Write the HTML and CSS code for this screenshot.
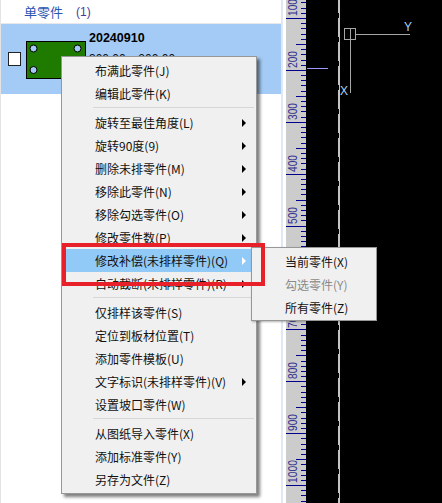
FILE: index.html
```html
<!DOCTYPE html>
<html lang="en">
<head>
  <meta charset="UTF-8">
  <meta name="viewport" content="width=device-width, initial-scale=1.0">
  <title>单零件</title>
  <link rel="stylesheet" href="styles.css">
</head>
<body>
  <div class="app">
    <div class="part-panel">
      <div class="panel-head">
        <span class="panel-title">单零件</span>
        <span class="panel-count">(1)</span>
      </div>
      <div class="part-row">
        <span class="part-check"></span>
        <svg class="part-thumb" width="60" height="38" viewBox="0 0 60 38">
          <rect x="0.5" y="0.5" width="59" height="37" fill="#1f7a00" stroke="#000"/>
          <circle cx="7.5" cy="7.5" r="3.5" fill="#a4cbf5" stroke="#000"/>
          <circle cx="51.5" cy="7.5" r="3.5" fill="#a4cbf5" stroke="#000"/>
          <circle cx="7.5" cy="29" r="3.5" fill="#a4cbf5" stroke="#000"/>
        </svg>
        <div class="part-info">
          <div class="part-name">20240910</div>
          <div class="part-size">300.00 x 200.00</div>
        </div>
      </div>
    </div>
    <div class="splitter"></div>
    <svg class="ruler" width="20" height="503" viewBox="0 0 20 503">
      <path id="ruler-ticks" stroke="#00008c" stroke-width="1" fill="none"/>
      <g class="ruler-labels">
        <text transform="translate(10.5 16) rotate(-90)" textLength="17" lengthAdjust="spacingAndGlyphs">100</text>
        <text transform="translate(10.5 68) rotate(-90)" textLength="17" lengthAdjust="spacingAndGlyphs">200</text>
        <text transform="translate(10.5 120) rotate(-90)" textLength="17" lengthAdjust="spacingAndGlyphs">300</text>
        <text transform="translate(10.5 172) rotate(-90)" textLength="17" lengthAdjust="spacingAndGlyphs">400</text>
        <text transform="translate(10.5 224) rotate(-90)" textLength="17" lengthAdjust="spacingAndGlyphs">500</text>
        <text transform="translate(10.5 276) rotate(-90)" textLength="17" lengthAdjust="spacingAndGlyphs">600</text>
        <text transform="translate(10.5 328) rotate(-90)" textLength="17" lengthAdjust="spacingAndGlyphs">700</text>
        <text transform="translate(10.5 379) rotate(-90)" textLength="17" lengthAdjust="spacingAndGlyphs">800</text>
        <text transform="translate(10.5 431) rotate(-90)" textLength="17" lengthAdjust="spacingAndGlyphs">900</text>
        <text transform="translate(10.5 483) rotate(-90)" textLength="23" lengthAdjust="spacingAndGlyphs">1000</text>
      </g>
    </svg>
    <svg class="canvas" width="136" height="503" viewBox="306 0 136 503">
      <path d="M307 68.5h21" stroke="#9a9aff" fill="none"/>
      <path d="M339.5 0v503" stroke="#c4c4c4" fill="none"/>
      <path d="M338.5 0v503" stroke="#c4c4c4" stroke-dasharray="19 5" stroke-dashoffset="6" fill="none"/>
      <g stroke="#a6a6a6" fill="none">
        <rect x="344.5" y="28.5" width="11" height="11"/>
        <path d="M350.5 28v65M355 34.5h55"/>
      </g>
      <text class="axis-label" x="404" y="31">Y</text>
      <text class="axis-label" x="340" y="95">X</text>
    </svg>
  </div>

  <div class="menu main-menu">
    <div class="menu-item">布满此零件(J)</div>
    <div class="menu-item">编辑此零件(K)</div>
    <div class="menu-sep"></div>
    <div class="menu-item has-sub">旋转至最佳角度(L)</div>
    <div class="menu-item has-sub">旋转90度(9)</div>
    <div class="menu-item has-sub">删除未排零件(M)</div>
    <div class="menu-item has-sub">移除此零件(N)</div>
    <div class="menu-item has-sub">移除勾选零件(O)</div>
    <div class="menu-item has-sub">修改零件数(P)</div>
    <div class="menu-item has-sub active">修改补偿(未排样零件)(Q)</div>
    <div class="menu-item has-sub">自动截断(未排样零件)(R)</div>
    <div class="menu-sep"></div>
    <div class="menu-item">仅排样该零件(S)</div>
    <div class="menu-item">定位到板材位置(T)</div>
    <div class="menu-item">添加零件模板(U)</div>
    <div class="menu-item has-sub">文字标识(未排样零件)(V)</div>
    <div class="menu-item">设置坡口零件(W)</div>
    <div class="menu-sep"></div>
    <div class="menu-item">从图纸导入零件(X)</div>
    <div class="menu-item">添加标准零件(Y)</div>
    <div class="menu-item">另存为文件(Z)</div>
  </div>

  <div class="menu sub-menu">
    <div class="menu-item">当前零件(X)</div>
    <div class="menu-item disabled">勾选零件(Y)</div>
    <div class="menu-item">所有零件(Z)</div>
  </div>

  <div class="callout"></div>

  <script src="ruler.js"></script>
</body>
</html>
```

FILE: styles.css
```css
body {
  font-family: "Noto Sans CJK SC", "Liberation Sans", sans-serif;
  margin: 0;
  overflow: hidden;
  background-color: #fff;
}

.app {
  display: flex;
  width: 442px;
  height: 503px;
}

/* left list */
.part-panel {
  width: 280px;
  border-left: 1px solid #e4e4e4;
}

.panel-head {
  display: flex;
  align-items: center;
  height: 23px;
  padding-left: 23px;
  border-bottom: 1px solid #e8e8e8;
  font-size: 13px;
}

.panel-title {
  color: #2a55b0;
}

.panel-count {
  margin-left: 13px;
  color: #4a3aa0;
  font-family: "Liberation Sans", sans-serif;
  font-size: 12px;
}

.part-row {
  display: flex;
  align-items: center;
  height: 70px;
  background-color: #a4cbf5;
}

.part-check {
  width: 11px;
  height: 12px;
  margin-left: 7px;
  background-color: #fff;
  border: 1px solid #222;
}

.part-thumb {
  margin-left: 5px;
  margin-top: 2px;
}

.part-info {
  align-self: flex-start;
  margin-left: 3px;
  margin-top: 6px;
  font-family: "Liberation Sans", sans-serif;
}

.part-name {
  font-size: 12.5px;
  font-weight: bold;
  line-height: 16px;
  color: #000;
}

.part-size {
  margin-top: 6px;
  font-size: 12px;
  line-height: 14px;
  color: #111;
}

.splitter {
  width: 5px;
  border-left: 2px solid #dfe8f3;
  box-sizing: border-box;
}

.ruler {
  flex: none;
  background-color: #cccccc;
}

.ruler-labels {
  font-family: "Liberation Sans", sans-serif;
  font-size: 12px;
  fill: #33338f;
}

.canvas {
  flex: none;
  background-color: #000;
}

.axis-label {
  font-family: "Liberation Sans", sans-serif;
  font-size: 12px;
  fill: #a8d4f4;
}

/* popup menus */
.menu {
  position: absolute;
  box-sizing: border-box;
  padding: 2px 0;
  background-color: #f0f0f0;
  border: 1px solid #979797;
  font-size: 12px;
  color: #111;
}

.main-menu {
  left: 61px;
  top: 56px;
  width: 196px;
  height: 438px;
  box-shadow: 3px 3px 3px rgba(0, 0, 0, 0.5);
}

.sub-menu {
  left: 251px;
  top: 247px;
  width: 126px;
  height: 74px;
  box-shadow: 1px 1px 2px rgba(0, 0, 0, 0.3);
}

.menu-item {
  display: flex;
  align-items: center;
  justify-content: space-between;
  height: 23px;
  padding-left: 33px;
  padding-right: 10px;
}

.menu-item.has-sub::after {
  content: "";
  border-left: 4px solid #000;
  border-top: 4px solid transparent;
  border-bottom: 4px solid transparent;
}

.menu-item.active {
  background-color: #91c9f7;
}

.menu-item.active::after {
  border-left-color: #fff;
}

.menu-item.disabled {
  color: #8a8a8a;
}

.menu-sep {
  height: 1px;
  margin: 2px 2px 3px 31px;
  background-color: #d7d7d7;
}

/* red annotation box */
.callout {
  position: absolute;
  left: 62px;
  top: 243px;
  width: 195px;
  height: 35px;
  border: 4px solid #e8202a;
}
```

FILE: ruler.js
```js
// ticks every 10 units, 100 units = 51.9px
var d = '';
for (var k = -3; k <= 94; k++) {
  var y = Math.round(18 + 5.19 * k) + 0.5;
  var start = 15;
  if (k % 10 === 0) start = 0;
  else if (k % 5 === 0) start = 10;
  d += 'M' + start + ' ' + y + 'H20';
}
document.getElementById('ruler-ticks').setAttribute('d', d);
```
